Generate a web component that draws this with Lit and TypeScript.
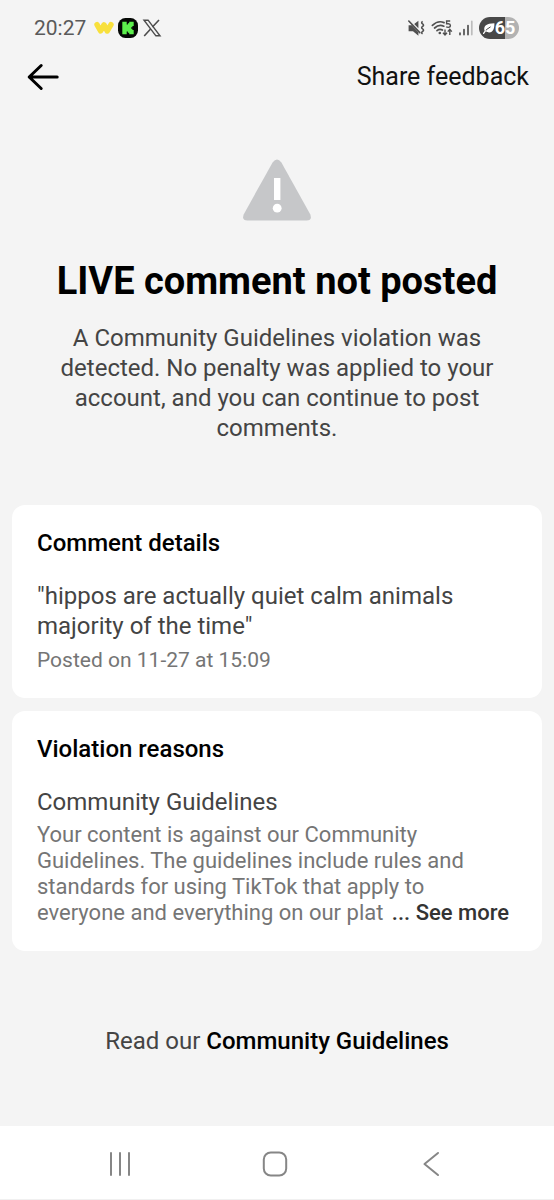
import { LitElement, html, css } from "lit";
import { customElement } from "lit/decorators.js";

@customElement("status-bar")
class StatusBar extends LitElement {
  static styles = css`
    :host {
      display: flex;
      align-items: center;
      justify-content: space-between;
      height: 56px;
      padding: 0 35px 0 34px;
      color: #5a5a5a;
    }
    .group {
      display: flex;
      align-items: center;
    }
    .left {
      gap: 4px;
    }
    .time {
      font-size: 21px;
      line-height: 24px;
      margin-right: 4px;
    }
    .right {
      gap: 6px;
    }
    svg {
      display: block;
    }
    .battery {
      display: flex;
      align-items: center;
      justify-content: center;
      width: 40px;
      height: 22px;
      border-radius: 11px;
      background: linear-gradient(90deg, #484848 65%, #b2b2b2 65%);
      color: #fff;
      font-size: 18px;
      font-weight: 700;
      line-height: 22px;
    }
  `;

  render() {
    return html`
      <div class="group left">
        <span class="time">20:27</span>
        <svg width="20" height="14" viewBox="0 0 20 14" aria-hidden="true">
          <path d="M3 3.600l3.600 6.400 3.400-6.200 3.200 6.200L17 3.600" fill="none" stroke="#f8e03c" stroke-width="5.400" stroke-linecap="round" stroke-linejoin="round" />
        </svg>
        <svg width="20" height="20" viewBox="0 0 20 20" aria-hidden="true">
          <rect width="20" height="20" rx="7.500" fill="#050805" />
          <path d="M4.300 3.800h4.400v2.700h1.200V5.200h1.300V3.800h4.500v4.200h-1.300v1.300h-1.200v1.400h1.200V12h1.300v4.200h-4.500v-1.400H9.900v-1.300H8.700v2.700H4.300z" fill="#5df04d" />
        </svg>
        <svg width="20" height="18" viewBox="0 0 20 18" fill="none" stroke="#4c4c4c" aria-hidden="true">
          <path d="M2 1.200h4.100L18 16.800h-4.100z" stroke-width="1.400" />
          <path d="M17 1l-6.600 7M8.600 10L2.200 17" stroke-width="1.600" />
        </svg>
      </div>
      <div class="group right">
        <svg width="18" height="18" viewBox="0 0 18 18" aria-hidden="true">
          <path d="M1.600 6.200h3.200l6.600 7v3.600L6 12.200H1.600zM7.200 5L11.400 1.800v7.400z" fill="#505050" />
          <path d="M1.800 2l11 11.600" stroke="#505050" stroke-width="1.600" stroke-linecap="round" />
          <path d="M15.600 2.400q-1.800 1.300 0 2.500t0 2.500 0 2.500 0 2.500 0 2.400" fill="none" stroke="#505050" stroke-width="1.600" />
        </svg>
        <svg width="22" height="18" viewBox="0 0 22 18" fill="none" stroke="#505050" aria-hidden="true">
          <path d="M1.400 6.400Q7 1 13 3.600M3.600 9Q8 5 12.800 7.200M6 11.600q2.600-2.200 5.400-.6" stroke-width="1.700" stroke-linecap="round" />
          <circle cx="8.800" cy="14" r="1.300" fill="#505050" stroke="none" />
          <path d="M19.200 2h-3.600v2.800h1.800q2 .2 2 1.800 0 1.800-2.200 1.800-1.200 0-2-.6" stroke-width="1.400" />
          <path d="M14 10.400v5.200M12 13.800l2 2.200 2-2.200M18.800 16v-5.200M16.800 12.600l2-2.200 2 2.200" stroke-width="1.400" />
        </svg>
        <svg width="14" height="16" viewBox="0 0 14 16" aria-hidden="true">
          <path d="M1 13v1.600M5 9.600v5M9 5.600v9" stroke="#505050" stroke-width="1.700" stroke-linecap="round" />
          <path d="M12.800 1.400v13.200" stroke="#bcbcbc" stroke-width="1.700" stroke-linecap="round" />
        </svg>
        <div class="battery">
          <svg width="12" height="12" viewBox="0 0 12 12" aria-hidden="true">
            <path d="M1.400 8.600C.6 4 3 1.400 11.400 1.200c.2 5-1.200 9.200-5.200 9.200-1.600 0-2.400-.4-3-.9z" fill="#fff" />
            <path d="M.6 11.400Q2.400 7.400 7.600 4.800" fill="none" stroke="#484848" stroke-width="1" />
            <path d="M.6 11.400l1.800-2.600" stroke="#fff" stroke-width="1.300" stroke-linecap="round" />
          </svg>
          <span>65</span>
        </div>
      </div>
    `;
  }
}

@customElement("info-card")
class InfoCard extends LitElement {
  static properties = { heading: { type: String } };
  declare heading: string;

  static styles = css`
    :host {
      display: block;
      padding: 23px 25px 25px;
      border-radius: 13px;
      background: #fff;
    }
    .heading {
      margin: 0 0 23px;
      color: #000;
      font-size: 24px;
      font-weight: 500;
      line-height: 30px;
    }
  `;

  render() {
    return html`
      <h2 class="heading">${this.heading}</h2>
      <slot></slot>
    `;
  }
}

@customElement("system-nav")
class SystemNav extends LitElement {
  static styles = css`
    :host {
      display: flex;
      align-items: center;
      justify-content: space-around;
      box-sizing: border-box;
      height: 74px;
      padding: 2px 45px 0 42px;
      background: #fff;
      border-bottom: 1px solid #f0f0f0;
    }
    .key {
      display: grid;
      place-items: center;
      width: 48px;
      height: 48px;
      padding: 0;
      border: 0;
      background: none;
      cursor: pointer;
    }
    svg {
      fill: none;
      stroke: #868686;
      stroke-width: 2;
      stroke-linecap: round;
      stroke-linejoin: round;
    }
  `;

  render() {
    return html`
      <button class="key" aria-label="Recent apps">
        <svg width="26" height="26" viewBox="0 0 26 26"><path d="M4 2v22M13 2v22M22 2v22" /></svg>
      </button>
      <button class="key" aria-label="Home">
        <svg width="26" height="26" viewBox="0 0 26 26"><rect x="1.800" y="1.500" width="22.400" height="23" rx="7" /></svg>
      </button>
      <button class="key" aria-label="Back">
        <svg width="26" height="26" viewBox="0 0 26 26"><path d="M20 2L6.500 13 20 24" /></svg>
      </button>
    `;
  }
}

@customElement("app-root")
class AppRoot extends LitElement {
  static styles = css`
    :host {
      display: flex;
      flex-direction: column;
      min-height: 100vh;
      background: #f4f4f4;
      color: #444;
      font-family: Roboto, "Liberation Sans", sans-serif;
      font-size: 24px;
      line-height: 30px;
    }
    button {
      padding: 0;
      border: 0;
      background: none;
      font: inherit;
      cursor: pointer;
    }
    svg {
      display: block;
    }
    .header {
      display: flex;
      align-items: center;
      justify-content: space-between;
      height: 42px;
      padding: 0 25px 0 26px;
    }
    .feedback {
      color: #111;
      font-size: 25px;
    }
    .hero {
      display: flex;
      flex-direction: column;
      align-items: center;
      padding: 61px 48px 62px;
      text-align: center;
    }
    .title {
      margin: 37px 0 19px;
      color: #000;
      font-size: 38px;
      font-weight: 700;
      line-height: 46px;
    }
    .text {
      margin: 0;
    }
    .cards {
      display: flex;
      flex-direction: column;
      gap: 13px;
      padding: 0 12px;
    }
    .note {
      margin: 6px 0 0;
      color: #757575;
      font-size: 21px;
      line-height: 26px;
    }
    .excerpt {
      margin-top: 5px;
      color: #757575;
      font-size: 22px;
      line-height: 26px;
    }
    .last {
      display: flex;
      justify-content: space-between;
      padding-right: 8px;
    }
    .more {
      flex: none;
      color: #333;
      font-weight: 500;
    }
    .footer {
      padding: 75px 24px 70px;
      text-align: center;
    }
    .link {
      color: #000;
      font-weight: 500;
      text-decoration: none;
    }
    .nav {
      margin-top: auto;
    }
  `;

  render() {
    return html`
      <status-bar></status-bar>
      <header class="header">
        <button aria-label="Back">
          <svg width="34" height="30" viewBox="0 0 34 30" fill="none" stroke="#000" stroke-width="3" stroke-linecap="round" stroke-linejoin="round">
            <path d="M15.200 3.500L3.200 15l12 11.500M3.200 15h28" />
          </svg>
        </button>
        <button class="feedback">Share feedback</button>
      </header>
      <main>
        <section class="hero">
          <svg width="70" height="62" viewBox="0 0 70 62" aria-hidden="true">
            <path d="M30.600 3.400Q35-2.600 39.400 3.400L68.200 55.200Q70.600 61.600 64.500 61.600H5.500Q-.6 61.600 1.800 55.200Z" fill="#c6c7c9" />
            <rect x="32" y="19" width="6.400" height="22" fill="#fff" />
            <circle cx="35.200" cy="49.200" r="4.400" fill="#fff" />
          </svg>
          <h1 class="title">LIVE comment not posted</h1>
          <p class="text">
            A Community Guidelines violation was detected. No penalty was applied to your account, and you can continue to
            post comments.
          </p>
        </section>
        <div class="cards">
          <info-card heading="Comment details">
            <p class="text">"hippos are actually quiet calm animals majority of the time"</p>
            <p class="note">Posted on 11-27 at 15:09</p>
          </info-card>
          <info-card heading="Violation reasons">
            <p class="text">Community Guidelines</p>
            <div class="excerpt">
              Your content is against our Community Guidelines. The guidelines include rules and standards for using TikTok
              that apply to
              <div class="last">
                <span>everyone and everything on our plat</span>
                <button class="more">... See more</button>
              </div>
            </div>
          </info-card>
        </div>
      </main>
      <footer class="footer">Read our <a class="link" href="#guidelines">Community Guidelines</a></footer>
      <system-nav class="nav"></system-nav>
    `;
  }
}
